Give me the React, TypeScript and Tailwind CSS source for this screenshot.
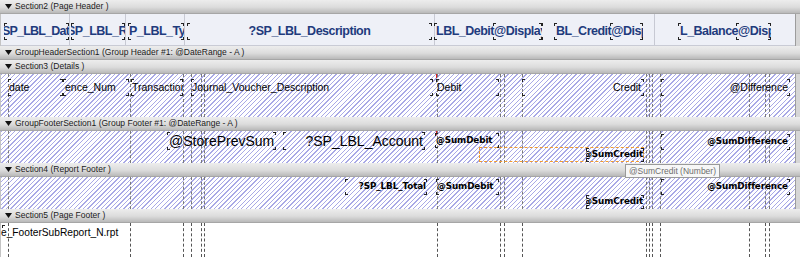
import React from "react";

const HATCH =
  "bg-[repeating-linear-gradient(135deg,#a9a9e6_0px,#a9a9e6_1px,#ffffff_1px,#ffffff_3.2px)]";

const GUIDES = [
  "left-[7px]",
  "left-[129px]",
  "left-[182px]",
  "left-[190px]",
  "left-[200px]",
  "left-[203px]",
  "left-[436px]",
  "left-[499px]",
  "left-[503px]",
  "left-[521px]",
  "left-[645px]",
  "left-[648px]",
  "left-[651px]",
  "left-[659px]",
  "left-[748px]",
  "left-[764px]",
  "left-[768px]",
];

const PH_LINES = [
  "left-[68px]",
  "left-[124px]",
  "left-[183px]",
  "left-[433px]",
  "left-[653px]",
];

function Bar({ label }: { label: string }) {
  return (
    <div className="h-[14px] shrink-0 flex items-center bg-[linear-gradient(#ededed,#dcdcdc_55%,#b9b9b9)] border-b border-[#a6a6a6] text-[8.5px] text-[#1a1a1a] leading-none font-['Liberation_Sans',Arial,sans-serif]">
      <svg width="7" height="5" viewBox="0 0 7 5" className="ml-[5px] mr-[3px] shrink-0">
        <path d="M0 0H7L3.5 5Z" fill="#111" />
      </svg>
      <span className="whitespace-nowrap">{label}</span>
    </div>
  );
}

function Corners() {
  return (
    <>
      <span className="absolute left-0 top-0 w-[3px] h-[3px] border-l border-t border-[#222]" />
      <span className="absolute right-0 top-0 w-[3px] h-[3px] border-r border-t border-[#222]" />
      <span className="absolute left-0 bottom-0 w-[3px] h-[3px] border-l border-b border-[#222]" />
      <span className="absolute right-0 bottom-0 w-[3px] h-[3px] border-r border-b border-[#222]" />
    </>
  );
}

function Field({
  pos,
  text,
  children,
}: {
  pos: string;
  text: string;
  children?: React.ReactNode;
}) {
  return (
    <div className={`absolute overflow-hidden flex items-center whitespace-nowrap ${pos} ${text}`}>
      <Corners />
      {children}
    </div>
  );
}

function Guides({ color }: { color: string }) {
  return (
    <>
      {GUIDES.map((g) => (
        <div key={g} className={`absolute top-0 bottom-0 w-0 border-l border-dashed ${color} ${g}`} />
      ))}
    </>
  );
}

function Body({
  h,
  bg,
  strip = true,
  children,
}: {
  h: string;
  bg: string;
  strip?: boolean;
  children: React.ReactNode;
}) {
  return (
    <div className={`flex shrink-0 ${h}`}>
      <div className={`relative flex-1 overflow-hidden border-l border-[#c4c4c4] ${bg}`}>{children}</div>
      {strip && <div className="w-[5px] bg-[#d6d6d6] border-l border-[#9c9c9c]" />}
    </div>
  );
}

const PH = "font-['Liberation_Sans',Arial,sans-serif] font-bold text-[12.5px] tracking-[-0.5px] text-[#1f3b7d]";
const DT = "font-['Liberation_Sans',Arial,sans-serif] text-[10.5px] text-black";
const SUM = "font-['DejaVu_Sans',Verdana,sans-serif] font-bold text-[8.8px] text-black tracking-[-0.1px]";
const BIG = "font-['Liberation_Sans',Arial,sans-serif] text-[14px] text-black";

export default function App() {
  return (
    <div className="relative w-[800px] h-[257px] overflow-hidden bg-white flex flex-col select-none">
      <Bar label="Section2 (Page Header )" />
      <Body h="h-[32px]" bg="bg-[#eef0f7]">
        {PH_LINES.map((l) => (
          <div key={l} className={`absolute top-0 bottom-0 w-[1px] bg-[#c7c9d3] ${l}`} />
        ))}
        <div className="absolute left-0 right-0 bottom-0 h-[1px] bg-[#c9cbd5]" />
        <Field pos="left-[3px] top-[9px] w-[65px] h-[17px]" text={PH}>
          <span className="ml-[-2px] tracking-[-0.8px]">SP_LBL_Date</span>
        </Field>
        <Field pos="left-[70px] top-[9px] w-[54px] h-[17px]" text={PH}>
          <span className="ml-[-4px]">SP_LBL_Ref</span>
        </Field>
        <Field pos="left-[127px] top-[9px] w-[56px] h-[17px]" text={PH}>
          <span className="pl-[1px]">P_LBL_Type</span>
        </Field>
        <Field pos="left-[186px] top-[9px] w-[245px] h-[17px] justify-center" text={PH}>
          <span>?SP_LBL_Description</span>
        </Field>
        <Field pos="left-[433px] top-[9px] w-[108px] h-[17px]" text={PH}>
          <span className="pl-[2px]">LBL_Debit@Display</span>
        </Field>
        <Field pos="left-[492px] top-[9px] w-[50px] h-[17px]" text={PH} />
        <Field pos="left-[553px] top-[9px] w-[89px] h-[17px]" text={PH}>
          <span className="pl-[2px]">BL_Credit@Display</span>
        </Field>
        <Field pos="left-[609px] top-[9px] w-[33px] h-[17px]" text={PH} />
        <Field pos="left-[677px] top-[9px] w-[93px] h-[17px]" text={PH}>
          <span className="pl-[2px]">L_Balance@Display</span>
        </Field>
        <Field pos="left-[735px] top-[9px] w-[35px] h-[17px]" text={PH} />
      </Body>
      <Bar label="GroupHeaderSection1 (Group Header #1: @DateRange - A )" />
      <Bar label="Section3 (Details )" />
      <Body h="h-[43px]" bg={HATCH}>
        <Guides color="border-[#7a7a7a]" />
        <div className="absolute left-[435px] top-0 w-[1px] h-[4px] bg-[#e02020]" />
        <Field pos="left-[7px] top-[5px] w-[55px] h-[17px]" text={DT}>
          <span className="pl-[1px]">date</span>
        </Field>
        <Field pos="left-[62px] top-[5px] w-[66px] h-[17px]" text={DT}>
          <span className="pl-[2px]">ence_Num</span>
        </Field>
        <Field pos="left-[130px] top-[5px] w-[52px] h-[17px]" text={DT}>
          <span className="pl-[1px]">Transaction</span>
        </Field>
        <Field pos="left-[190px] top-[5px] w-[242px] h-[17px]" text={DT}>
          <span className="pl-[1px]">Journal_Voucher_Description</span>
        </Field>
        <Field pos="left-[435px] top-[5px] w-[63px] h-[17px]" text={DT}>
          <span className="pl-[1px]">Debit</span>
        </Field>
        <Field pos="left-[521px] top-[5px] w-[122px] h-[17px] justify-end" text={DT}>
          <span className="pr-[3px]">Credit</span>
        </Field>
        <Field pos="left-[660px] top-[5px] w-[129px] h-[17px] justify-end" text={DT}>
          <span className="pr-[2px]">@Difference</span>
        </Field>
      </Body>
      <Bar label="GroupFooterSection1 (Group Footer #1: @DateRange - A )" />
      <Body h="h-[32px]" bg={HATCH}>
        <Guides color="border-[#7a7a7a]" />
        <div className="absolute left-[435px] top-0 w-[1px] h-[4px] bg-[#e02020]" />
        <Field pos="left-[166px] top-[1px] w-[109px] h-[18px]" text={BIG}>
          <span className="pl-[2px]">@StorePrevSum</span>
        </Field>
        <Field pos="left-[282px] top-[1px] w-[142px] h-[18px] justify-end" text={BIG}>
          <span className="pr-[2px]">?SP_LBL_Account</span>
        </Field>
        <Field pos="left-[434px] top-[2px] w-[64px] h-[15px]" text={SUM}>
          <span className="pl-[1px]">@SumDebit</span>
        </Field>
        <div className="absolute left-[478px] top-[16px] w-[165px] h-[15px] border border-dashed border-[#f29a2e]" />
        <Field pos="left-[585px] top-[17px] w-[58px] h-[14px] justify-end" text={SUM}>
          <span className="pr-[1px]">@SumCredit</span>
        </Field>
        <Field pos="left-[660px] top-[3px] w-[129px] h-[16px] justify-end" text={SUM}>
          <span className="pr-[2px]">@SumDifference</span>
        </Field>
      </Body>
      <Bar label="Section4 (Report Footer )" />
      <Body h="h-[32px]" bg={HATCH}>
        <Guides color="border-[#7a7a7a]" />
        <Field pos="left-[344px] top-[2px] w-[82px] h-[16px] justify-end" text={SUM}>
          <span className="pr-[1px]">?SP_LBL_Total</span>
        </Field>
        <Field pos="left-[435px] top-[2px] w-[63px] h-[16px]" text={SUM}>
          <span className="pl-[1px]">@SumDebit</span>
        </Field>
        <Field pos="left-[585px] top-[18px] w-[58px] h-[14px] justify-end" text={SUM}>
          <span className="pr-[1px]">@SumCredit</span>
        </Field>
        <Field pos="left-[660px] top-[2px] w-[129px] h-[16px] justify-end" text={SUM}>
          <span className="pr-[2px]">@SumDifference</span>
        </Field>
      </Body>
      <Bar label="Section5 (Page Footer )" />
      <Body h="h-[34px]" bg="bg-white" strip={false}>
        <Guides color="border-[#555555]" />
        <div className="absolute left-0 top-[2px] w-[125px] h-[16px] flex items-center whitespace-nowrap font-['Liberation_Sans',Arial,sans-serif] text-[10.2px] text-black">
          <span className="absolute left-[1px] top-0 w-[3px] h-[3px] border-l border-t border-[#222]" />
          <span>e_FooterSubReport_N.rpt</span>
        </div>
      </Body>

      <div className="absolute left-[625px] top-[164px] w-[95px] h-[14px] bg-[#f7f7f7] border border-[#9a9a9a] flex items-center justify-center font-['Liberation_Sans',Arial,sans-serif] text-[8.5px] text-[#6e6e6e] whitespace-nowrap leading-none">
        @SumCredit (Number)
      </div>
    </div>
  );
}
